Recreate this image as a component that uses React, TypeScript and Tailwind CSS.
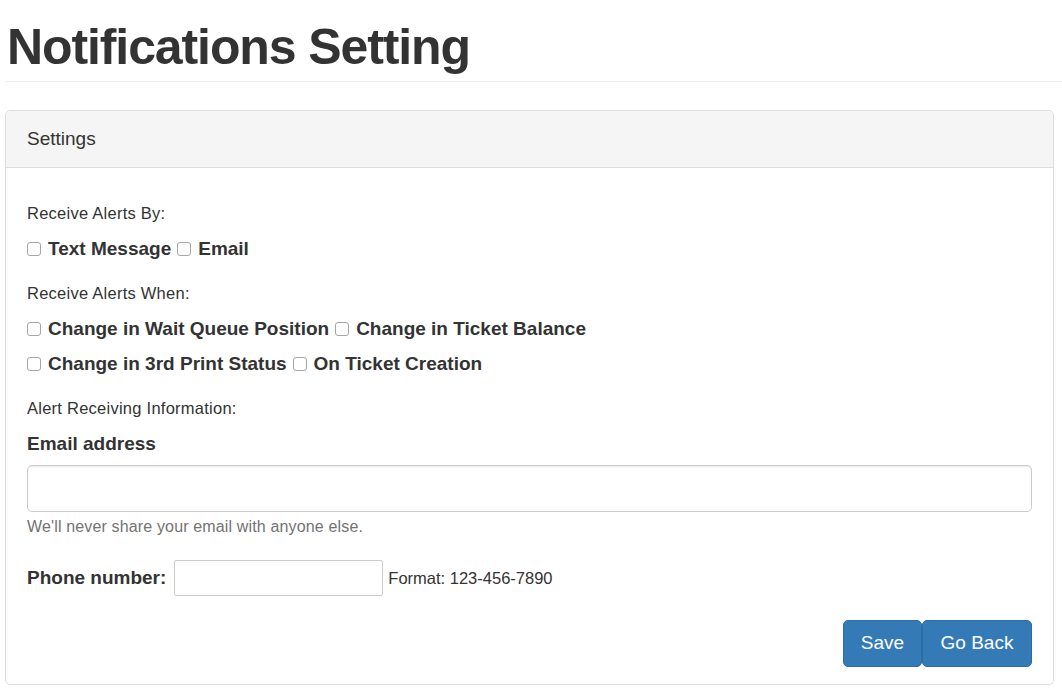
function Check({ label }: { label: string }) {
  return (
    <label className="flex items-center">
      <span className="w-[14px] h-[14px] rounded-[3px] border border-[#a6a6a6] bg-white shrink-0" />
      <span className="ml-[7px] font-bold text-[19px]">{label}</span>
    </label>
  );
}

export default function App() {
  return (
    <div className="min-h-[695px] bg-white pl-[5px] text-[#333] font-['Liberation_Sans',Arial,sans-serif]">
      <div className="mt-[19px] pb-[5px] border-b border-[#eee]">
        <h1 className="text-[50px] leading-[57px] font-bold pl-[2px] tracking-[-1.1px]">
          Notifications Setting
        </h1>
      </div>

      <div className="mt-[28px] mr-[8px] border border-[#ddd] rounded-[5px]">
        <div className="h-[57px] flex items-center px-[21px] bg-[#f5f5f5] border-b border-[#ddd] rounded-t-[5px] text-[19px]">
          Settings
        </div>

        <div className="px-[21px] pt-[35px] pb-[17px] flex flex-col">
          <p className="h-5 leading-5 text-[16.5px] tracking-[0.25px]">Receive Alerts By:</p>
          <div className="mt-[13px] h-[26px] flex items-center gap-[6px]">
            <Check label="Text Message" />
            <Check label="Email" />
          </div>

          <p className="mt-[21px] h-5 leading-5 text-[16.5px] tracking-[0.25px]">Receive Alerts When:</p>
          <div className="mt-[13px] h-[26px] flex items-center gap-[6px]">
            <Check label="Change in Wait Queue Position" />
            <Check label="Change in Ticket Balance" />
          </div>
          <div className="mt-[9px] h-[26px] flex items-center gap-[6px]">
            <Check label="Change in 3rd Print Status" />
            <Check label="On Ticket Creation" />
          </div>

          <p className="mt-[21px] h-5 leading-5 text-[16.5px] tracking-[0.25px]">
            Alert Receiving Information:
          </p>
          <p className="mt-[13px] h-[26px] leading-[26px] text-[19px] font-bold">Email address</p>
          <input
            type="email"
            className="mt-[8px] h-[47px] w-full rounded-[5px] border border-[#ccc] px-3 outline-none shadow-[inset_0_1px_1px_rgba(0,0,0,0.075)]"
          />
          <p className="mt-[5px] h-5 leading-5 text-[16px] tracking-[0.15px] text-[#737373]">
            We'll never share your email with anyone else.
          </p>

          <div className="mt-[23px] h-[36px] flex items-center">
            <span className="text-[19px] font-bold">Phone number:</span>
            <input
              type="text"
              className="ml-[8px] h-[36px] w-[209px] border border-[#ccc] rounded-[2px] px-2 outline-none"
            />
            <span className="ml-[5px] text-[16.5px]">Format: 123-456-7890</span>
          </div>

          <div className="mt-[24px] flex justify-end">
            <button className="h-[47px] w-[79px] rounded-[5px] bg-[#337ab7] border border-[#2e6da4] text-white text-[19px]">
              Save
            </button>
            <button className="h-[47px] w-[110px] rounded-[5px] bg-[#337ab7] border border-[#2e6da4] text-white text-[19px]">
              Go Back
            </button>
          </div>
        </div>
      </div>
    </div>
  );
}
